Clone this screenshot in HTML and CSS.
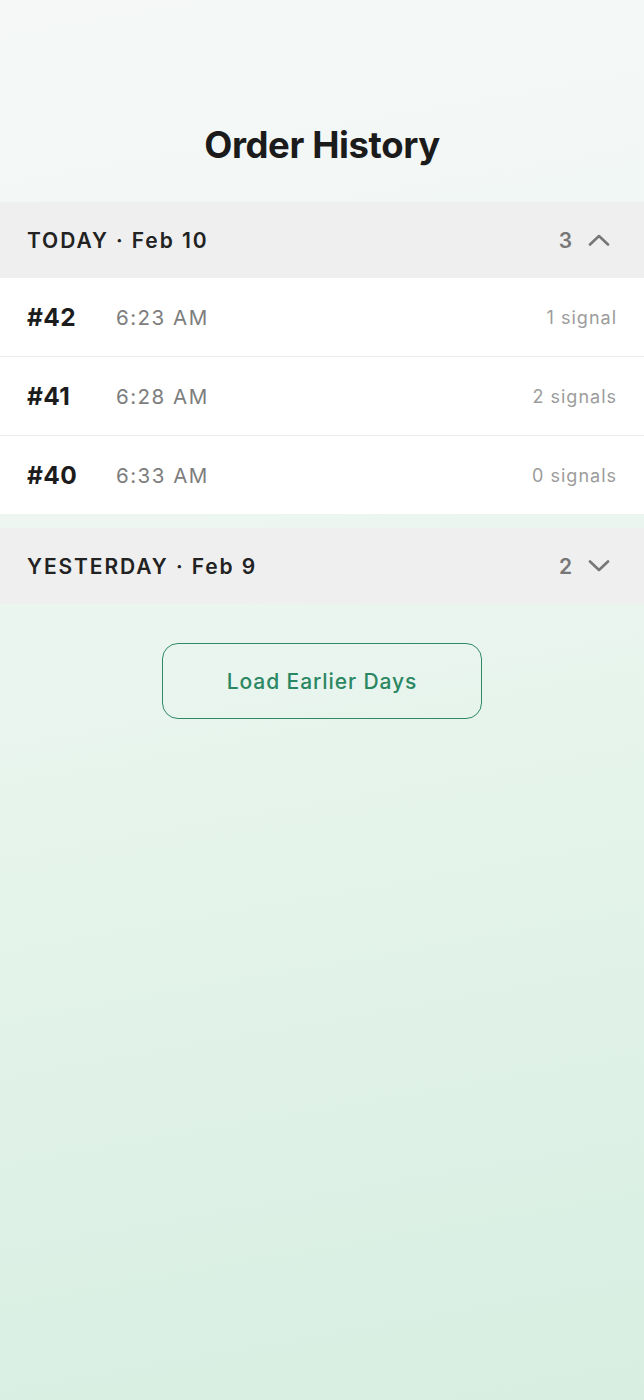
FILE: index.html
```html
<!DOCTYPE html>
<html lang="en">
<head>
<meta charset="utf-8">
<title>Order History</title>
<link rel="stylesheet" href="styles.css">
</head>
<body>
<div class="page">
  <header class="top">
    <h1 class="title">Order History</h1>
  </header>

  <section class="day">
    <div class="day-head">
      <span class="day-label">TODAY · Feb 10</span>
      <span class="day-meta">
        <span class="day-count">3</span>
        <svg class="chev" width="22" height="12" viewBox="0 0 22 12"><path d="M2 10.5 L11 2 L20 10.5" fill="none" stroke="#777" stroke-width="2.6" stroke-linecap="round" stroke-linejoin="round"/></svg>
      </span>
    </div>
    <div class="rows">
      <div class="row"><span class="num">#42</span><span class="time">6:23 AM</span><span class="sig">1 signal</span></div>
      <div class="row"><span class="num">#41</span><span class="time">6:28 AM</span><span class="sig">2 signals</span></div>
      <div class="row"><span class="num">#40</span><span class="time">6:33 AM</span><span class="sig">0 signals</span></div>
    </div>
  </section>

  <section class="day">
    <div class="day-head">
      <span class="day-label">YESTERDAY · Feb 9</span>
      <span class="day-meta">
        <span class="day-count">2</span>
        <svg class="chev" width="22" height="12" viewBox="0 0 22 12"><path d="M2 1.5 L11 10 L20 1.5" fill="none" stroke="#777" stroke-width="2.6" stroke-linecap="round" stroke-linejoin="round"/></svg>
      </span>
    </div>
  </section>

  <div class="more">
    <button class="load">Load Earlier Days</button>
  </div>
</div>
</body>
</html>
```
FILE: styles.css
```css
html, body {
  margin: 0;
  padding: 0;
}
body {
  font-family: Inter, "Noto Sans", "Liberation Sans", sans-serif;
  background: linear-gradient(170deg, #f5f8f7 0%, #f1f7f4 25%, #e6f4ec 55%, #d7eee1 100%);
  min-height: 1400px;
}
.page {
  min-height: 1400px;
  display: flex;
  flex-direction: column;
}
.top {
  height: 202px;
  display: flex;
  align-items: flex-end;
  justify-content: center;
  box-sizing: border-box;
  padding-bottom: 35px;
}
.title {
  margin: 0;
  font-size: 36.5px;
  line-height: 44px;
  font-weight: 700;
  color: #1b1b1b;
  letter-spacing: -0.4px;
}
.day {
  margin-bottom: 14px;
}
.day-head {
  height: 76px;
  background: #efefef;
  display: flex;
  align-items: center;
  justify-content: space-between;
  padding: 0 34px 0 27px;
}
.day-label {
  font-size: 21px;
  font-weight: 600;
  letter-spacing: 1.9px;
  color: #222;
}
.day-meta {
  display: flex;
  align-items: center;
  gap: 16px;
}
.day-count {
  font-size: 21px;
  font-weight: 600;
  color: #777;
}
.chev {
  display: block;
}
.rows {
  background: #fff;
}
.row {
  height: 78px;
  display: flex;
  align-items: center;
  padding: 0 27px;
  border-bottom: 1px solid #ececec;
}
.row:last-child {
  border-bottom: none;
}
.num {
  width: 89px;
  font-size: 24.5px;
  font-weight: 700;
  color: #1c1c1c;
  letter-spacing: 0.4px;
}
.time {
  font-size: 20.5px;
  color: #7d7d7d;
  letter-spacing: 1.5px;
}
.sig {
  margin-left: auto;
  font-size: 18px;
  color: #9c9c9c;
  letter-spacing: 1px;
}
.more {
  display: flex;
  justify-content: center;
  padding-top: 25px;
}
.load {
  width: 320px;
  height: 76px;
  border: 1.8px solid #2e8a65;
  border-radius: 16px;
  background: transparent;
  color: #2b8762;
  font-family: Inter, "Noto Sans", "Liberation Sans", sans-serif;
  font-size: 21px;
  font-weight: 500;
  letter-spacing: 0.9px;
}
```
